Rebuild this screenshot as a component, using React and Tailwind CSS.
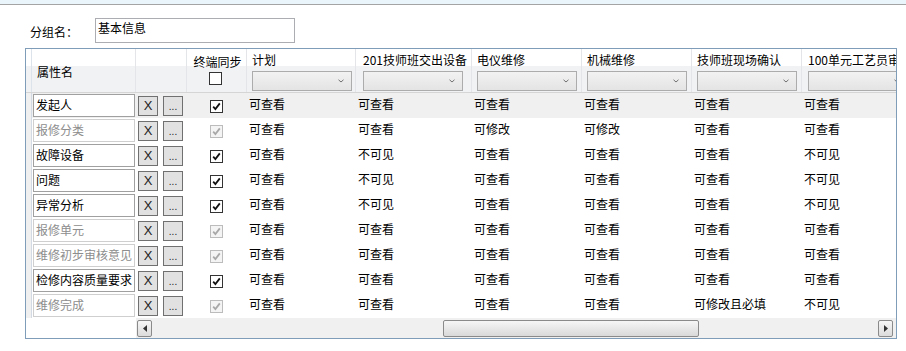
import React from 'react';

const columns = [
  { name: '计划', w: 'w-[109px]', pl: 'pl-[5px]' },
  { name: '201技师班交出设备', w: 'w-[116px]', pl: 'pl-[7px]' },
  { name: '电仪维修', w: 'w-[110px]', pl: 'pl-[5px]' },
  { name: '机械维修', w: 'w-[110px]', pl: 'pl-[5px]' },
  { name: '技师班现场确认', w: 'w-[110px]', pl: 'pl-[5px]' },
  { name: '100单元工艺员审核', w: 'w-[110px]', pl: 'pl-[6px]' },
];

const rows = [
  { name: '发起人', enabled: true, values: ['可查看', '可查看', '可查看', '可查看', '可查看', '可查看'] },
  { name: '报修分类', enabled: false, values: ['可查看', '可查看', '可修改', '可修改', '可查看', '可查看'] },
  { name: '故障设备', enabled: true, values: ['可查看', '不可见', '可查看', '可查看', '可查看', '不可见'] },
  { name: '问题', enabled: true, values: ['可查看', '不可见', '可查看', '可查看', '可查看', '不可见'] },
  { name: '异常分析', enabled: true, values: ['可查看', '不可见', '可查看', '可查看', '可查看', '不可见'] },
  { name: '报修单元', enabled: false, values: ['可查看', '可查看', '可查看', '可查看', '可查看', '可查看'] },
  { name: '维修初步审核意见', enabled: false, values: ['可查看', '可查看', '可查看', '可查看', '可查看', '可查看'] },
  { name: '检修内容质量要求', enabled: true, values: ['可查看', '可查看', '可查看', '可查看', '可查看', '可查看'] },
  { name: '维修完成', enabled: false, values: ['可查看', '可查看', '可查看', '可查看', '可修改且必填', '不可见'] },
];

const CheckBox = ({ checked, disabled }) => (
  <div
    className={`w-[13px] h-[13px] border flex items-center justify-center ${
      disabled ? 'border-[#bcbcbc] bg-[#f4f4f4]' : 'border-[#333333] bg-white'
    }`}
  >
    {checked && (
      <svg width="9" height="9" viewBox="0 0 9 9">
        <polyline
          points="1.2,4.6 3.4,7 7.8,1.4"
          fill="none"
          stroke={disabled ? '#a8a8a8' : '#111111'}
          strokeWidth="1.8"
        />
      </svg>
    )}
  </div>
);

const Select = () => (
  <div className="w-[100px] h-[20px] border border-[#acacac] bg-gradient-to-b from-[#f2f2f2] to-[#e4e4e4] flex items-center justify-end pr-[7px]">
    <svg width="6" height="4" viewBox="0 0 6 4">
      <polyline points="0.5,0.8 3,3 5.5,0.8" fill="none" stroke="#707070" strokeWidth="1" />
    </svg>
  </div>
);

const Arrow = ({ dir }) => (
  <div className="w-[15px] h-[17px] border border-[#8a8a8a] rounded-[2px] bg-gradient-to-b from-[#f6f6f6] to-[#dcdcdc] flex items-center justify-center">
    <svg width="4" height="7" viewBox="0 0 4 7">
      <polygon points={dir === 'left' ? '4,0 0,3.5 4,7' : '0,0 4,3.5 0,7'} fill="#333333" />
    </svg>
  </div>
);

const App = () => {
  return (
    <div
      className="w-[906px] h-[351px] bg-white overflow-hidden text-[12px] leading-4 text-black"
      style={{ fontFamily: '"Noto Sans CJK SC", "Noto Sans", sans-serif' }}
    >
      <div className="h-[4px] bg-[#eaf4fb]" />
      <div className="h-px bg-[#a4a4a4]" />

      <div className="flex items-start mt-[13px]">
        <div className="ml-[30px] w-[65px] pt-[6px]">分组名：</div>
        <div className="w-[200px] h-[25px] border border-[#abadb3] pl-[2px] pt-px">基本信息</div>
      </div>

      <div className="ml-[25px] mt-[5px] w-[872px] h-[291px] border border-[#7f9db9] overflow-hidden flex flex-col">
        {/* header */}
        <div className="flex h-[44px] shrink-0 border-b border-[#d5d5d5] bg-[linear-gradient(to_bottom,#ffffff_0%,#ffffff_40%,#f1f2f4_40%,#f1f2f4_100%)]">
          <div className="w-[6px] shrink-0 border-r border-[#dde3ea]" />
          <div className="w-[104px] shrink-0 border-r border-[#e3e5e8] pl-[5px] pt-[15px]">属性名</div>
          <div className="w-[51px] shrink-0 border-r border-[#e3e5e8]" />
          <div className="w-[60px] shrink-0 border-r border-[#e3e5e8] flex flex-col items-center pt-[5px]">
            <div className="pl-[2px]">终端同步</div>
            <div className="mt-[2px] -ml-[2px]">
              <CheckBox checked={false} />
            </div>
          </div>
          {columns.map((c) => (
            <div key={c.name} className={`${c.w} shrink-0 border-r border-[#e3e5e8] ${c.pl} pt-[3px] whitespace-nowrap overflow-hidden`}>
              <div className="h-[16px]">{c.name}</div>
              <div className="mt-[3px]">
                <Select />
              </div>
            </div>
          ))}
        </div>

        {/* body */}
        {rows.map((r, i) => (
          <div key={r.name} className={`flex h-[25px] shrink-0 ${i === 0 ? 'bg-[#f0f0f0]' : 'bg-white'}`}>
            <div className="w-[6px] shrink-0 bg-[#f0f0f0] border-r border-[#d3dae3]" />
            <div className="w-[104px] shrink-0 pl-px pt-px">
              <div
                className={`w-[102px] h-[23px] border bg-white pl-[2px] pt-[2px] whitespace-nowrap overflow-hidden ${
                  r.enabled ? 'border-[#a0a0a0] text-black' : 'border-[#cfcfcf] text-[#8d8d8d]'
                }`}
              >
                {r.name}
              </div>
            </div>
            <div className="w-[51px] shrink-0 flex gap-[5px] pl-[2px] pt-[3px]">
              <div className="w-[20px] h-[20px] border border-[#707070] bg-[#e1e1e1] flex items-center justify-center text-[13px] text-[#222]" style={{ fontFamily: '"Liberation Sans", sans-serif' }}>
                X
              </div>
              <div className="w-[20px] h-[20px] border border-[#707070] bg-[#e1e1e1] flex items-end justify-center pb-[3px] text-[10px] leading-[10px] text-[#222]" style={{ fontFamily: '"Liberation Sans", sans-serif' }}>
                ...
              </div>
            </div>
            <div className="w-[60px] shrink-0 pl-[23px] pt-[7px]">
              <CheckBox checked disabled={!r.enabled} />
            </div>
            {columns.map((c, j) => (
              <div key={c.name} className={`${c.w} shrink-0 pl-[2px] pt-[3px] whitespace-nowrap overflow-hidden`}>
                {r.values[j]}
              </div>
            ))}
          </div>
        ))}

        {/* horizontal scrollbar */}
        <div className="flex flex-1">
          <div className="w-[110px] shrink-0 bg-white" />
          <div className="flex-1 bg-[#f0f0f0] flex items-center">
            <div className="ml-px">
              <Arrow dir="left" />
            </div>
            <div className="ml-[291px] w-[256px] h-[17px] border border-[#8a8a8a] rounded-[2px] bg-gradient-to-b from-[#f6f6f6] to-[#d9d9d9]" />
            <div className="ml-auto mr-[3px]">
              <Arrow dir="right" />
            </div>
          </div>
        </div>
      </div>
    </div>
  );
};

export default App;
